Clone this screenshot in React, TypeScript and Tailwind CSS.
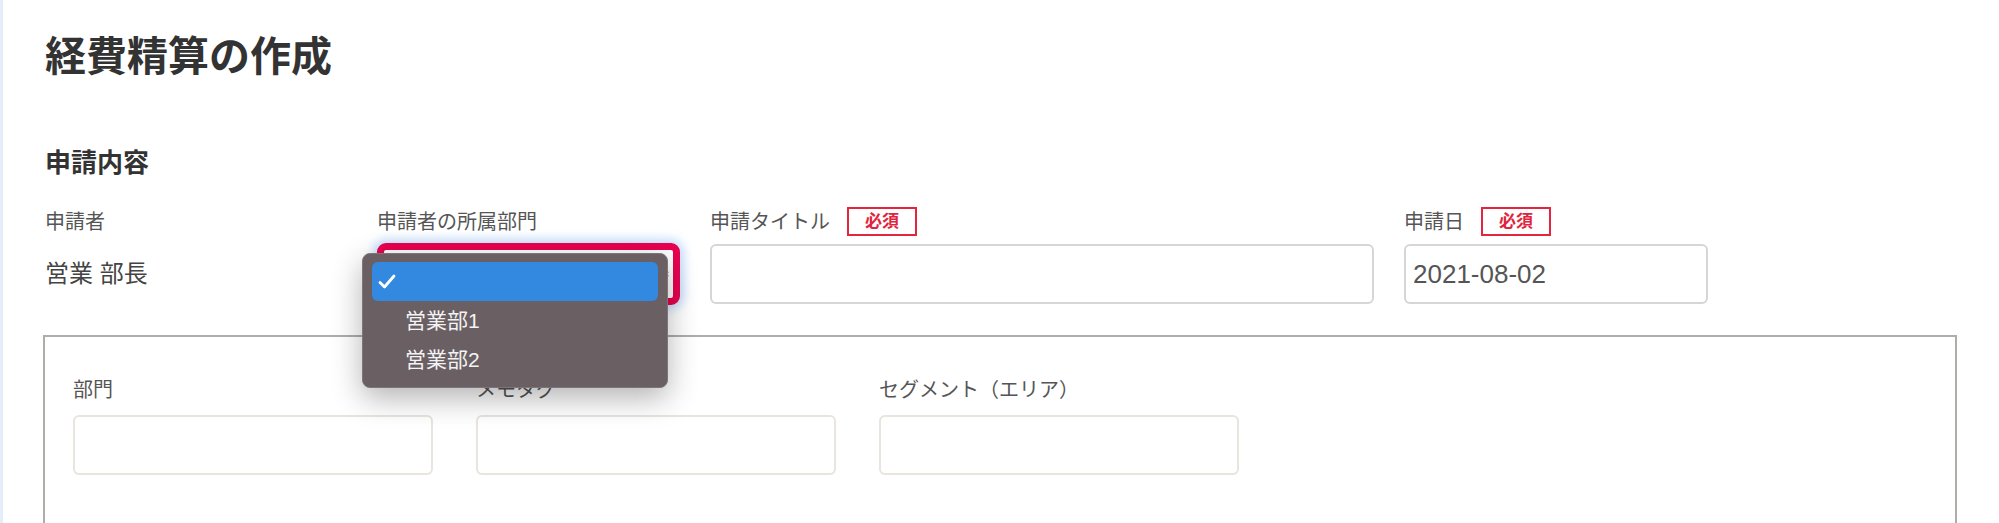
import { ChevronsUpDown } from "lucide-react";

const font = "font-['Liberation_Sans','Noto_Sans_CJK_JP',sans-serif]";

function Required() {
  return (
    <span className="ml-[17px] flex h-[29px] w-[70px] items-center justify-center border-2 border-[#e4253f] text-[17px] leading-none font-bold text-[#e1243e]">
      必須
    </span>
  );
}

function DeptSelect() {
  return (
    <div className="relative -mt-px">
      <div className="flex h-[62px] w-[303px] items-center justify-end rounded-[9px] border-[7px] border-[#ea0050] bg-white pr-[1px] shadow-[0_0_10px_4px_rgba(130,185,250,0.45)]">
        <ChevronsUpDown size={14} strokeWidth={2} className="text-[#555]" />
      </div>

      {/* open option list */}
      <div className="absolute left-[-15px] top-[10px] z-10 w-[306px] rounded-[8px] border border-[#7d7579] bg-[#6a6064] px-[9px] py-[8px] shadow-[0_10px_30px_rgba(0,0,0,0.3)]">
        <div className="flex h-[39px] items-center rounded-[6px] bg-[#3388e0] pl-[6px]">
          <svg width="18" height="15" viewBox="0 0 18 15" fill="none">
            <path d="M2 8.5 L6.5 13 L16 2" stroke="white" strokeWidth="2.8" strokeLinecap="round" strokeLinejoin="round" />
          </svg>
        </div>
        {["営業部1", "営業部2"].map((item) => (
          <div key={item} className="flex h-[39px] items-center pl-[33px] text-[21px] text-[#f3f3f3]">
            {item}
          </div>
        ))}
      </div>
    </div>
  );
}

export default function App() {
  return (
    <div className={`${font} min-h-[523px] overflow-hidden border-l-[3px] border-[#e4eefb] bg-white pl-[42px] pt-[37px]`}>
      <h1 className="text-[41px] leading-[41px] font-bold text-[#333]">経費精算の作成</h1>

      <h2 className="mt-[72px] text-[26px] leading-[26px] font-bold text-[#333]">申請内容</h2>

      <div className="mt-[31px] grid grid-cols-[302px_303px_664px_304px] gap-x-[30px] text-[#555]">
        <div>
          <div className="flex h-[29px] items-center text-[20px] leading-[20px]">申請者</div>
          <div className="mt-[8px] flex h-[60px] items-center text-[24px] text-[#444]">営業 部長</div>
        </div>

        <div>
          <div className="flex h-[29px] items-center text-[20px] leading-[20px]">申請者の所属部門</div>
          <div className="mt-[8px]">
            <DeptSelect />
          </div>
        </div>

        <div>
          <div className="flex h-[29px] items-center text-[20px] leading-[20px]">
            申請タイトル
            <Required />
          </div>
          <div className="mt-[8px] h-[60px] rounded-[6px] border-2 border-[#d6d6d6] bg-white" />
        </div>

        <div>
          <div className="flex h-[29px] items-center text-[20px] leading-[20px]">
            申請日
            <Required />
          </div>
          <div className="mt-[8px] flex h-[60px] items-center rounded-[6px] border-2 border-[#d6d6d6] bg-white pl-[7px] text-[26px] text-[#555]">
            2021-08-02
          </div>
        </div>
      </div>

      <div className="mt-[30px] h-[230px] w-[1914px] -ml-[2px] border-2 border-[#aeada7] pl-[28px] pt-[43px]">
        <div className="grid grid-cols-[360px_360px_360px] gap-x-[43px] text-[#555]">
          {["部門", "メモタグ", "セグメント（エリア）"].map((label) => (
            <div key={label}>
              <div className="text-[20px] leading-[20px]">{label}</div>
              <div className="mt-[15px] h-[60px] rounded-[6px] border-2 border-[#e8e4de] bg-white" />
            </div>
          ))}
        </div>
      </div>
    </div>
  );
}
